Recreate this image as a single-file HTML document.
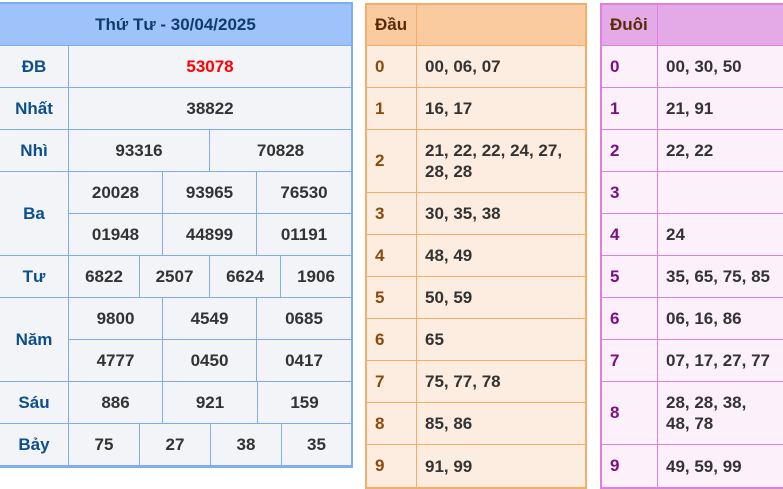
<!DOCTYPE html>
<html><head><meta charset="utf-8"><style>
*{box-sizing:border-box;margin:0;padding:0}
body{width:783px;height:487px;background:#fff;font-family:"Liberation Sans",Arial,sans-serif;font-weight:bold;font-size:17px;position:relative;overflow:hidden}
.t{position:absolute}
.r{display:flex;border-bottom:1px solid var(--b)}
.r:last-child{border-bottom:none}
.c{display:flex;align-items:center;justify-content:center;border-left:1px solid var(--b);height:100%}
.c:first-child{border-left:none}
.sp .c:first-child{border-left:1px solid var(--b)}
#L{--b:#7eaef0;left:-2px;top:2px;width:355px;height:466px;border:2px solid #7eaef0;border-bottom:3px solid #7eaef0;background:#f3f4f8;color:#333}
#L .h{background:#9ec3fa;color:#0f3d6a;justify-content:center;align-items:center}
#L .lab{color:#0c4f8c;width:68px;flex:none}
.sp{flex-direction:column;display:flex;flex:1}
.sp .r{flex:1}
#M{--b:#f4ae6a;left:365px;top:3px;width:222px;height:486px;border:2px solid #f4ae6a;background:#fdede0;color:#333}
#M .h{background:#fbcba0}
#M .d{color:#8b4a0c}
#R{--b:#e07fe0;left:600px;top:3px;width:186px;height:486px;border:2px solid #e07fe0;background:#fcf0fa;color:#333}
#R .h{background:#e4aae8}
#R .d{color:#7e0e86}
.lt .c{justify-content:flex-start;padding-left:8px}
.lt .c+.c{padding-left:8px;line-height:21px}
.lt .h .c{color:#5a2a08}
</style></head><body>
<div class="t" id="L">
 <div class="r h" style="height:42px">Thứ Tư - 30/04/2025</div>
 <div class="r" style="height:42px"><div class="c lab">ĐB</div><div class="c" style="flex:1;color:#f00">53078</div></div>
 <div class="r" style="height:42px"><div class="c lab">Nhất</div><div class="c" style="flex:1">38822</div></div>
 <div class="r" style="height:42px"><div class="c lab">Nhì</div><div class="c" style="width:141px">93316</div><div class="c" style="flex:1">70828</div></div>
 <div class="r" style="height:84px"><div class="c lab">Ba</div><div class="sp">
  <div class="r"><div class="c" style="width:94px">20028</div><div class="c" style="width:94px">93965</div><div class="c" style="flex:1">76530</div></div>
  <div class="r"><div class="c" style="width:94px">01948</div><div class="c" style="width:94px">44899</div><div class="c" style="flex:1">01191</div></div></div></div>
 <div class="r" style="height:42px"><div class="c lab">Tư</div><div class="c" style="width:71px">6822</div><div class="c" style="width:70px">2507</div><div class="c" style="width:71px">6624</div><div class="c" style="flex:1">1906</div></div>
 <div class="r" style="height:84px"><div class="c lab">Năm</div><div class="sp">
  <div class="r"><div class="c" style="width:94px">9800</div><div class="c" style="width:94px">4549</div><div class="c" style="flex:1">0685</div></div>
  <div class="r"><div class="c" style="width:94px">4777</div><div class="c" style="width:94px">0450</div><div class="c" style="flex:1">0417</div></div></div></div>
 <div class="r" style="height:42px"><div class="c lab">Sáu</div><div class="c" style="width:94px">886</div><div class="c" style="width:95px">921</div><div class="c" style="flex:1">159</div></div>
 <div class="r" style="height:42px"><div class="c lab">Bảy</div><div class="c" style="width:71px">75</div><div class="c" style="width:71px">27</div><div class="c" style="width:71px">38</div><div class="c" style="flex:1">35</div></div>
</div>
<div class="t lt" id="M">
 <div class="r h" style="height:41px"><div class="c" style="width:49px">Đầu</div><div class="c" style="flex:1"></div></div>
 <div class="r" style="height:42px"><div class="c d" style="width:49px">0</div><div class="c" style="flex:1">00, 06, 07</div></div>
 <div class="r" style="height:42px"><div class="c d" style="width:49px">1</div><div class="c" style="flex:1">16, 17</div></div>
 <div class="r" style="height:63px"><div class="c d" style="width:49px">2</div><div class="c" style="flex:1">21, 22, 22, 24, 27,<br>28, 28</div></div>
 <div class="r" style="height:42px"><div class="c d" style="width:49px">3</div><div class="c" style="flex:1">30, 35, 38</div></div>
 <div class="r" style="height:42px"><div class="c d" style="width:49px">4</div><div class="c" style="flex:1">48, 49</div></div>
 <div class="r" style="height:42px"><div class="c d" style="width:49px">5</div><div class="c" style="flex:1">50, 59</div></div>
 <div class="r" style="height:42px"><div class="c d" style="width:49px">6</div><div class="c" style="flex:1">65</div></div>
 <div class="r" style="height:42px"><div class="c d" style="width:49px">7</div><div class="c" style="flex:1">75, 77, 78</div></div>
 <div class="r" style="height:42px"><div class="c d" style="width:49px">8</div><div class="c" style="flex:1">85, 86</div></div>
 <div class="r" style="height:42px"><div class="c d" style="width:49px">9</div><div class="c" style="flex:1">91, 99</div></div>
</div>
<div class="t lt" id="R">
 <div class="r h" style="height:41px"><div class="c" style="width:55px">Đuôi</div><div class="c" style="flex:1"></div></div>
 <div class="r" style="height:42px"><div class="c d" style="width:55px">0</div><div class="c" style="flex:1">00, 30, 50</div></div>
 <div class="r" style="height:42px"><div class="c d" style="width:55px">1</div><div class="c" style="flex:1">21, 91</div></div>
 <div class="r" style="height:42px"><div class="c d" style="width:55px">2</div><div class="c" style="flex:1">22, 22</div></div>
 <div class="r" style="height:42px"><div class="c d" style="width:55px">3</div><div class="c" style="flex:1"></div></div>
 <div class="r" style="height:42px"><div class="c d" style="width:55px">4</div><div class="c" style="flex:1">24</div></div>
 <div class="r" style="height:42px"><div class="c d" style="width:55px">5</div><div class="c" style="flex:1">35, 65, 75, 85</div></div>
 <div class="r" style="height:42px"><div class="c d" style="width:55px">6</div><div class="c" style="flex:1">06, 16, 86</div></div>
 <div class="r" style="height:42px"><div class="c d" style="width:55px">7</div><div class="c" style="flex:1">07, 17, 27, 77</div></div>
 <div class="r" style="height:63px"><div class="c d" style="width:55px">8</div><div class="c" style="flex:1">28, 28, 38,<br>48, 78</div></div>
 <div class="r" style="height:42px"><div class="c d" style="width:55px">9</div><div class="c" style="flex:1">49, 59, 99</div></div>
</div>
</body></html>
